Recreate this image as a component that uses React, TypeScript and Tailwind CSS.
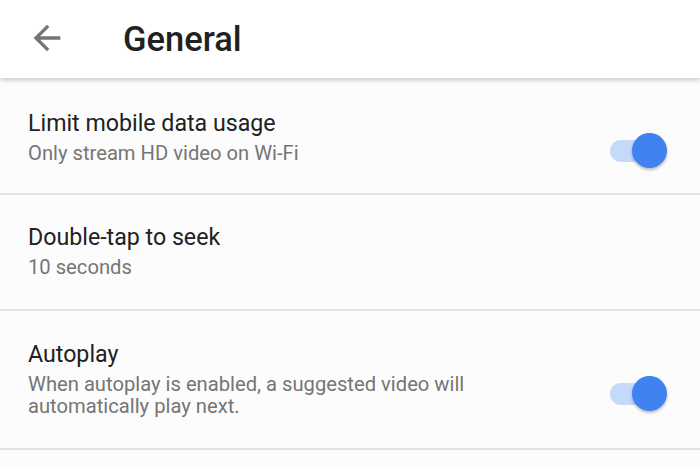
import React from "react";

function Toggle() {
  return (
    <div className="relative w-[58px] h-[38px] shrink-0">
      <div className="absolute left-0 top-[8px] w-[48px] h-[22px] rounded-full bg-[#c5d9fb]" />
      <div className="absolute right-[1px] top-[1px] w-[35px] h-[35px] rounded-full bg-[#4083f0] shadow-[0_2px_3px_rgba(0,0,0,0.25)]" />
    </div>
  );
}

function Row({
  title,
  subtitle,
  toggle,
  cls,
}: {
  title: string;
  subtitle: React.ReactNode;
  toggle?: boolean;
  cls: string;
}) {
  return (
    <div className={`flex items-center border-b-2 border-[#e2e2e2] pl-[28px] pr-[32px] ${cls}`}>
      <div className="flex-1 self-start">
        <div className="text-[23.2px] leading-[30px] text-[#212121]">{title}</div>
        <div className="mt-[4px] text-[20.2px] leading-[22px] text-[#757575]">{subtitle}</div>
      </div>
      {toggle && <Toggle />}
    </div>
  );
}

export default function App() {
  return (
    <div
      className="w-[700px] h-[467px] overflow-hidden bg-[#fcfcfc] flex flex-col"
      style={{ fontFamily: "Roboto, 'Noto Sans', sans-serif" }}
    >
      <div className="relative z-10 h-[78px] shrink-0 bg-white shadow-[0_2px_5px_rgba(0,0,0,0.22)] flex items-center pl-[27px]">
        <svg width="40" height="40" viewBox="0 0 24 24" className="-mt-[3px]" fill="#757575">
          <path d="M20 11H7.83l5.59-5.59L12 4l-8 8 8 8 1.41-1.41L7.83 13H20v-2z" />
        </svg>
        <div className="ml-[56px] text-[34.5px] font-medium text-[#212121] leading-none">General</div>
      </div>
      <Row
        cls="h-[117px] pt-[30px]"
        title="Limit mobile data usage"
        subtitle="Only stream HD video on Wi-Fi"
        toggle
      />
      <Row cls="h-[116px] pt-[27px]" title="Double-tap to seek" subtitle="10 seconds" />
      <Row
        cls="h-[139px] pt-[28px]"
        title="Autoplay"
        subtitle={
          <>
            When autoplay is enabled, a suggested video will
            <br />
            automatically play next.
          </>
        }
        toggle
      />
    </div>
  );
}
